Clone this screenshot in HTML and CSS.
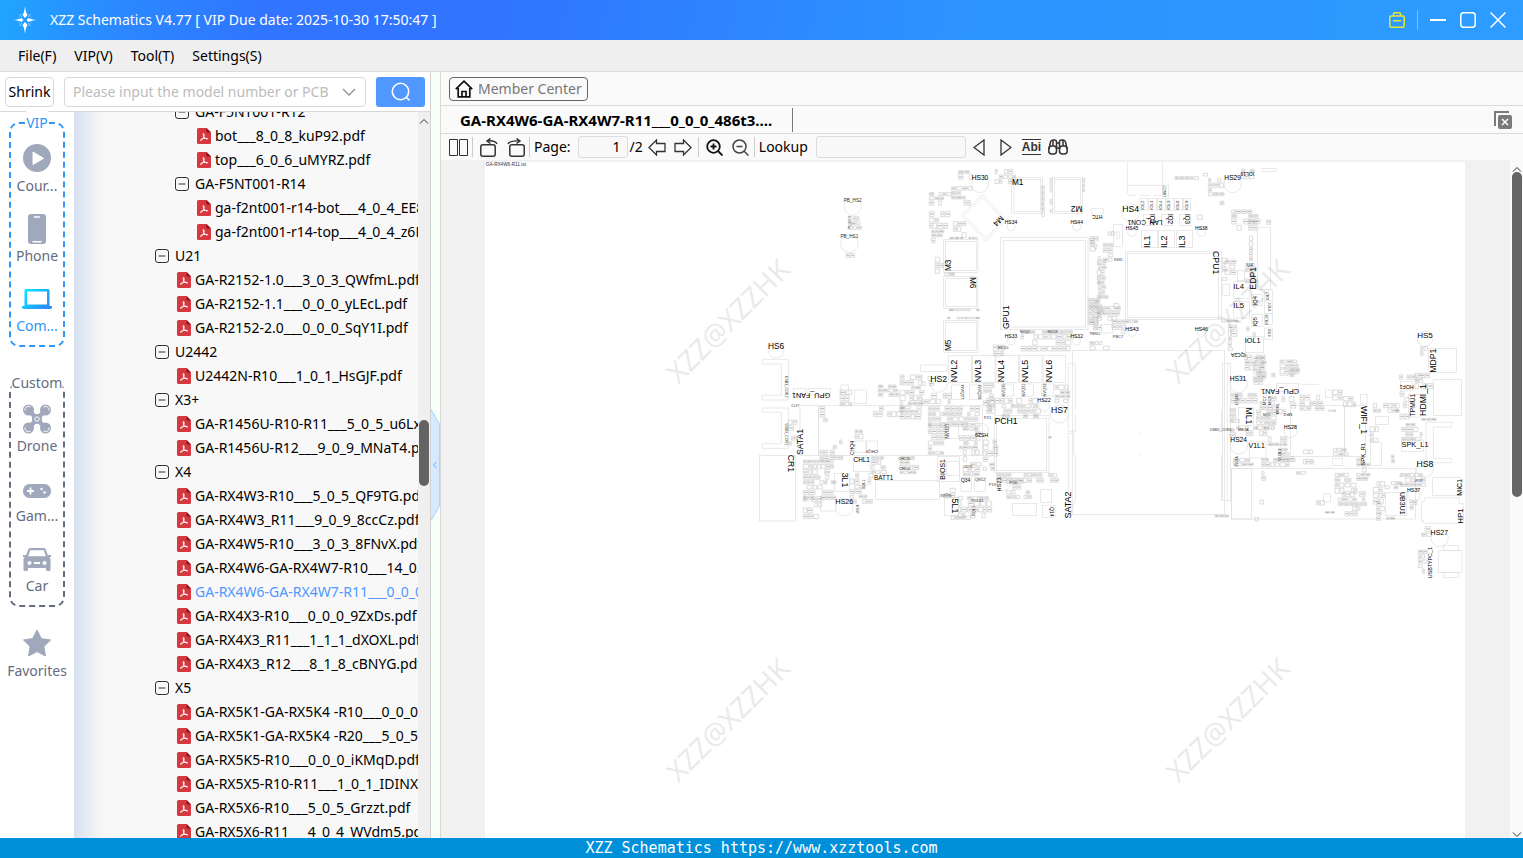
FILE: index.html
```html
<!DOCTYPE html>
<html lang="en">
<head>
<meta charset="utf-8">
<title>XZZ Schematics V4.77</title>
<link rel="stylesheet" href="styles.css">
</head>
<body>
<svg class="defs" aria-hidden="true">
  <symbol id="pdf" viewBox="0 0 14 16"><path d="M1.500 0H9.500L14 4.500V14.500Q14 16 12.500 16H1.500Q0 16 0 14.500V1.500Q0 0 1.500 0Z" fill="#d6383f"/><path d="M9.500 0L14 4.500H10.500Q9.500 4.500 9.500 3.500Z" fill="#8f1219"/><path d="M6.500 5.500C7.500 5.500 7.200 8 6.200 9.800C5 12 3.500 13 3.400 12.200C3.300 11.200 7 9.700 10.600 10.600C11 11.700 7.500 10.500 6.700 8.500C6.200 7.300 6 5.500 6.500 5.500Z" fill="none" stroke="#fff" stroke-width="1"/></symbol>
  <symbol id="minus" viewBox="0 0 14 14"><rect x=".5" y=".5" width="13" height="13" rx="2.500" fill="none" stroke="#333"/><path d="M3.500 7H10.500" stroke="#333"/></symbol>
</svg>
<div class="app">
  <header class="titlebar">
    <svg class="logo" viewBox="0 0 24 28"><circle cx="12" cy="14" r="6.500" fill="none" stroke="#8cc6ff" stroke-width="1" opacity=".5"/><path d="M6 8L9 11M18 8L15 11M6 20L9 17M18 20L15 17" stroke="#8cc6ff" stroke-width="1"/><g fill="#fff"><path d="M12 0C12.500 5 13.500 8 14.500 9L12 12L9.500 9C10.500 8 11.500 5 12 0ZM12 28C12.500 23 13.500 20 14.500 19L12 16L9.500 19C10.500 20 11.500 23 12 28ZM0 14C4 13.700 7 13 8.500 12L10.500 14L8.500 16C7 15 4 14.300 0 14ZM24 14C20 13.700 17 13 15.500 12L13.500 14L15.500 16C17 15 20 14.300 24 14Z"/></g></svg>
    <h1 class="title">XZZ Schematics V4.77 [ VIP Due date: 2025-10-30 17:50:47 ]</h1>
    <div class="window-controls">
      <button class="win" aria-label="Toolbox"><svg width="16" height="16" viewBox="0 0 16 16" fill="none" stroke="#e6e63c" stroke-width="1.500"><rect x=".8" y="4" width="14.400" height="11.200" rx="1.500"/><path d="M4.500 4V2Q4.500 .8 5.700 .8H10.300Q11.500 .8 11.500 2V4M4 8.800H12"/></svg></button>
      <span class="win-sep"></span>
      <button class="win" aria-label="Minimize"><svg width="16" height="16" viewBox="0 0 16 16"><path d="M0 8H16" stroke="#fff" stroke-width="2"/></svg></button>
      <button class="win" aria-label="Maximize"><svg width="16" height="16" viewBox="0 0 16 16"><rect x=".8" y=".8" width="14.400" height="14.400" rx="3" fill="none" stroke="#fff" stroke-width="1.500"/></svg></button>
      <button class="win" aria-label="Close"><svg width="16" height="16" viewBox="0 0 16 16"><path d="M.5 .5L15.500 15.500M15.500 .5L.5 15.500" stroke="#fff" stroke-width="1.500"/></svg></button>
    </div>
  </header>
  <nav class="menubar">
    <button class="menu">File(F)</button><button class="menu">VIP(V)</button><button class="menu">Tool(T)</button><button class="menu">Settings(S)</button>
  </nav>
  <div class="body">
    <section class="left">
      <form class="search">
        <button type="button" class="shrink">Shrink</button>
        <div class="combo">
          <input class="query" type="text" aria-label="Model number" placeholder="Please input the model number or PCB">
          <svg width="14" height="8" viewBox="0 0 14 8"><path d="M1 1L7 7L13 1" fill="none" stroke="#999" stroke-width="1.500"/></svg>
        </div>
        <button type="button" class="go" aria-label="Search"><svg width="20" height="20" viewBox="0 0 20 20" fill="none" stroke="#fff" stroke-width="1.600"><circle cx="9.500" cy="9.500" r="8.200"/><path d="M15.200 15.200L18.500 18.500"/></svg></button>
      </form>
      <div class="browse">
        <nav class="side">
          <div class="group vip">
            <span class="group-name">VIP</span>
            <button class="cat"><svg viewBox="0 0 32 32"><circle cx="16" cy="16" r="14" fill="#a0a8bc"/><path d="M12 10V22.500L22.500 16.300Z" fill="#fff" stroke="#fff" stroke-linejoin="round"/></svg>Cour...</button>
            <button class="cat"><svg viewBox="0 0 32 32"><rect x="7" y="2" width="18" height="30" rx="3" fill="#a0a8bc"/><path d="M13.500 5H18.500M12 29.800H20" stroke="#fff" stroke-width="1.500" stroke-linecap="round"/></svg>Phone</button>
            <button class="cat active"><svg viewBox="0 0 32 32"><defs><linearGradient id="lap" x2="1" y2=".6"><stop stop-color="#00f0ff"/><stop offset="1" stop-color="#2b8cff"/></linearGradient></defs><path fill="url(#lap)" fill-rule="evenodd" d="M5 7H27Q28.500 7 28.500 8.500V24H31V26L29.500 27H2.500L1 26V24H3.500V8.500Q3.500 7 5 7ZM6 9.500V22.500H26V9.500Z"/></svg>Com...</button>
          </div>
          <div class="group custom">
            <span class="group-name">Custom</span>
            <button class="cat"><svg viewBox="0 0 32 32"><g fill="#a0a8bc"><circle cx="7.500" cy="8" r="5.500"/><circle cx="24.500" cy="8" r="5.500"/><circle cx="7.500" cy="26" r="5.500"/><circle cx="24.500" cy="26" r="5.500"/><circle cx="16" cy="17" r="5"/></g><path d="M8 8.500L24 25.500M24 8.500L8 25.500" stroke="#a0a8bc" stroke-width="4.500"/><g fill="none" stroke="#fff"><path d="M4 8.500A3.500 3.500 0 0 1 9.500 5M28 8.500A3.500 3.500 0 0 0 22.500 5M4 25.500A3.500 3.500 0 0 0 9.500 29M28 25.500A3.500 3.500 0 0 1 22.500 29"/><circle cx="16" cy="17" r="2.200"/></g></svg>Drone</button>
            <button class="cat"><svg viewBox="0 0 32 32"><rect x="2" y="12" width="28" height="14" rx="6.500" fill="#a0a8bc"/><path d="M9.500 15.500V22.500M6 19H13" stroke="#fff" stroke-width="1.800"/><circle cx="20.500" cy="17" r="1.200" fill="#fff"/><circle cx="23.500" cy="20.500" r="1.200" fill="#fff"/></svg>Gam...</button>
            <button class="cat"><svg viewBox="0 0 32 32"><path transform="translate(0 2)" fill="#a0a8bc" fill-rule="evenodd" d="M9.500 4H22.500Q24.500 4 25 6L26.800 11H30V13H28.500L29.500 15V25.500Q29.500 27 28 27H26.500Q25 27 25 25.500V24H7V25.500Q7 27 5.500 27H4Q2.500 27 2.500 25.500V15L3.500 13H2V11H5.200L7 6Q7.500 4 9.500 4ZM9.200 6.300L7.200 12.300H24.800L22.800 6.300ZM6.500 19A2 2 0 1 0 10.500 19A2 2 0 1 0 6.500 19ZM21.500 19A2 2 0 1 0 25.500 19A2 2 0 1 0 21.500 19ZM13 18V20H19V18Z"/></svg>Car</button>
          </div>
          <button class="cat favorites"><svg viewBox="0 0 32 32"><path d="M16 3L20.300 11.600L29.500 13L22.900 19.500L24.400 29L16 24.600L7.600 29L9.100 19.500L2.500 13L11.700 11.600Z" fill="#a0a8bc" stroke="#a0a8bc" stroke-linejoin="round"/></svg>Favorites</button>
        </nav>
        <div class="tree-wrap">
          <ul class="tree">
            <li class="row sub"><svg class="tg"><use href="#minus"/></svg>GA-F5NT001-R12</li>
            <li class="row subfile"><svg class="pf"><use href="#pdf"/></svg>bot___8_0_8_kuP92.pdf</li>
            <li class="row subfile"><svg class="pf"><use href="#pdf"/></svg>top___6_0_6_uMYRZ.pdf</li>
            <li class="row sub"><svg class="tg"><use href="#minus"/></svg>GA-F5NT001-R14</li>
            <li class="row subfile"><svg class="pf"><use href="#pdf"/></svg>ga-f2nt001-r14-bot___4_0_4_EE8Xm.pdf</li>
            <li class="row subfile"><svg class="pf"><use href="#pdf"/></svg>ga-f2nt001-r14-top___4_0_4_z6Kqa.pdf</li>
            <li class="row"><svg class="tg"><use href="#minus"/></svg>U21</li>
            <li class="row file"><svg class="pf"><use href="#pdf"/></svg>GA-R2152-1.0___3_0_3_QWfmL.pdf</li>
            <li class="row file"><svg class="pf"><use href="#pdf"/></svg>GA-R2152-1.1___0_0_0_yLEcL.pdf</li>
            <li class="row file"><svg class="pf"><use href="#pdf"/></svg>GA-R2152-2.0___0_0_0_SqY1I.pdf</li>
            <li class="row"><svg class="tg"><use href="#minus"/></svg>U2442</li>
            <li class="row file"><svg class="pf"><use href="#pdf"/></svg>U2442N-R10___1_0_1_HsGJF.pdf</li>
            <li class="row"><svg class="tg"><use href="#minus"/></svg>X3+</li>
            <li class="row file"><svg class="pf"><use href="#pdf"/></svg>GA-R1456U-R10-R11___5_0_5_u6Lxx.pdf</li>
            <li class="row file"><svg class="pf"><use href="#pdf"/></svg>GA-R1456U-R12___9_0_9_MNaT4.pdf</li>
            <li class="row"><svg class="tg"><use href="#minus"/></svg>X4</li>
            <li class="row file"><svg class="pf"><use href="#pdf"/></svg>GA-RX4W3-R10___5_0_5_QF9TG.pdf</li>
            <li class="row file"><svg class="pf"><use href="#pdf"/></svg>GA-RX4W3_R11___9_0_9_8ccCz.pdf</li>
            <li class="row file"><svg class="pf"><use href="#pdf"/></svg>GA-RX4W5-R10___3_0_3_8FNvX.pdf</li>
            <li class="row file"><svg class="pf"><use href="#pdf"/></svg>GA-RX4W6-GA-RX4W7-R10___14_0.pdf</li>
            <li class="row file selected"><svg class="pf"><use href="#pdf"/></svg>GA-RX4W6-GA-RX4W7-R11___0_0_0_486t3.pdf</li>
            <li class="row file"><svg class="pf"><use href="#pdf"/></svg>GA-RX4X3-R10___0_0_0_9ZxDs.pdf</li>
            <li class="row file"><svg class="pf"><use href="#pdf"/></svg>GA-RX4X3_R11___1_1_1_dXOXL.pdf</li>
            <li class="row file"><svg class="pf"><use href="#pdf"/></svg>GA-RX4X3_R12___8_1_8_cBNYG.pdf</li>
            <li class="row"><svg class="tg"><use href="#minus"/></svg>X5</li>
            <li class="row file"><svg class="pf"><use href="#pdf"/></svg>GA-RX5K1-GA-RX5K4 -R10___0_0_0.pdf</li>
            <li class="row file"><svg class="pf"><use href="#pdf"/></svg>GA-RX5K1-GA-RX5K4 -R20___5_0_5.pdf</li>
            <li class="row file"><svg class="pf"><use href="#pdf"/></svg>GA-RX5K5-R10___0_0_0_iKMqD.pdf</li>
            <li class="row file"><svg class="pf"><use href="#pdf"/></svg>GA-RX5X5-R10-R11___1_0_1_IDINX.pdf</li>
            <li class="row file"><svg class="pf"><use href="#pdf"/></svg>GA-RX5X6-R10___5_0_5_Grzzt.pdf</li>
            <li class="row file"><svg class="pf"><use href="#pdf"/></svg>GA-RX5X6-R11___4_0_4_WVdm5.pdf</li>
          </ul>
          <div class="vbar"><svg width="10" height="6" viewBox="0 0 10 6"><path d="M1 5.500L5 1.500L9 5.500" fill="none" stroke="#333"/></svg><div class="thumb"></div></div>
        </div>
      </div>
    </section>
    <div class="divider"><button class="handle" aria-label="Collapse panel"><svg width="9" height="112" viewBox="0 0 9 112"><path d="M0 .5L8.500 15V97L0 111.500" fill="#d6e9ff" stroke="#a9d3fb"/><path d="M5.500 53L2.500 56L5.500 59" fill="none" stroke="#5fb0f5"/></svg></button></div>
    <main class="right">
      <div class="member-row"><a class="member" href="#"><svg width="18" height="18" viewBox="0 0 18 18" fill="none" stroke="#111" stroke-width="1.700"><path d="M.8 9.200L9 1.200L17.200 9.200M3.200 8V16.800H14.800V8M7 16.500V11.500H11V16.500"/></svg>Member Center</a></div>
      <div class="tabs">
        <button class="tab">GA-RX4W6-GA-RX4W7-R11___0_0_0_486t3....</button>
        <button class="close-all" aria-label="Close all"><svg width="18" height="18" viewBox="0 0 18 18"><path d="M1 15V1H15" fill="none" stroke="#7a7a7a" stroke-width="2"/><rect x="4" y="4" width="14" height="14" rx="2" fill="#7a7a7a"/><path d="M8 8L14 14M14 8L8 14" stroke="#fff" stroke-width="1.500"/></svg></button>
      </div>
      <div class="toolbar">
        <button class="tool t-pages" aria-label="Two pages"><svg width="19" height="17" viewBox="0 0 19 17" fill="none" stroke="#333"><path d="M.5 .5H8.500V16.500H.5ZM10.500 .5H18.500V16.500H10.500Z"/></svg></button>
        <span class="sep"></span>
        <button class="tool t-left" aria-label="Rotate left"><svg width="18" height="19" viewBox="0 0 18 19" fill="none" stroke="#333" stroke-width="1.500"><rect x=".8" y="6.800" width="14.400" height="11.400" rx="2"/><path d="M17 6C15.500 3 12 2.500 7.500 3M10.500 .5L7 3L10.500 5.500"/></svg></button>
        <button class="tool t-right" aria-label="Rotate right"><svg width="18" height="19" viewBox="0 0 18 19" fill="none" stroke="#333" stroke-width="1.500"><rect x="2.800" y="6.800" width="14.400" height="11.400" rx="2"/><path d="M1 6C2.500 3 6 2.500 12.500 3M9.500 .5L13 3L9.500 5.500"/></svg></button>
        <span class="sep"></span>
        <label class="lbl" for="page">Page:</label><input id="page" class="page-no" type="text" value="1"><span class="total">/2</span>
        <button class="tool" aria-label="Previous page"><svg width="18" height="17" viewBox="0 0 18 17" fill="none" stroke="#333" stroke-width="1.300"><path d="M1 8.500L8.500 1V4.500H17V12.500H8.500V16Z"/></svg></button>
        <button class="tool t-next" aria-label="Next page"><svg width="18" height="17" viewBox="0 0 18 17" fill="none" stroke="#333" stroke-width="1.300"><path d="M17 8.500L9.500 1V4.500H1V12.500H9.500V16Z"/></svg></button>
        <span class="sep"></span>
        <button class="tool t-in" aria-label="Zoom in"><svg width="17" height="17" viewBox="0 0 17 17" fill="none" stroke="#111" stroke-width="1.800"><circle cx="7.500" cy="7.500" r="6.300"/><path d="M12 12L16.500 16.500M4.500 7.500H10.500M7.500 4.500V10.500"/></svg></button>
        <button class="tool t-out" aria-label="Zoom out"><svg width="17" height="17" viewBox="0 0 17 17" fill="none" stroke="#444" stroke-width="1.500"><circle cx="7.500" cy="7.500" r="6.500"/><path d="M12.200 12.200L16.500 16.500M4.500 7.500H10.500"/></svg></button>
        <span class="sep"></span>
        <label class="lbl" for="lookup">Lookup</label><input id="lookup" class="lookup" type="text">
        <button class="tool t-prev" aria-label="Find previous"><svg width="12" height="17" viewBox="0 0 12 17"><path d="M11 1V16L1 8.500Z" fill="none" stroke="#333" stroke-width="1.300"/></svg></button>
        <button class="tool t-fwd" aria-label="Find next"><svg width="12" height="17" viewBox="0 0 12 17"><path d="M1 1V16L11 8.500Z" fill="none" stroke="#333" stroke-width="1.300"/></svg></button>
        <button class="tool abi">Abi</button>
        <button class="tool t-bin" aria-label="Find"><svg width="20" height="16" viewBox="0 0 20 16" fill="none" stroke="#333" stroke-width="1.500"><rect x=".8" y="7" width="7.700" height="8" rx="3"/><rect x="11.500" y="7" width="7.700" height="8" rx="3"/><path d="M1 10L2.500 3Q3 1 5 1H6.500Q8.500 1 8.500 3V10M19 10L17.500 3Q17 1 15 1H13.500Q11.500 1 11.500 3V10M8.500 4H11.500M8.500 9H11.500M5 1.500V7M15 1.500V7"/></svg></button>
      </div>
      <div class="viewer">
        <div class="canvas"><svg id="board" class="board" viewBox="1455 486 2940 2028" role="img" aria-label="Board schematic"></svg></div>
        <div class="vbar view-bar"><svg width="10" height="6" viewBox="0 0 10 6"><path d="M1 5.500L5 1.500L9 5.500" fill="none" stroke="#333"/></svg><div class="view-thumb"></div><svg class="down" width="10" height="6" viewBox="0 0 10 6"><path d="M1 .5L5 4.500L9 .5" fill="none" stroke="#333"/></svg></div>
      </div>
    </main>
  </div>
  <footer class="status">XZZ Schematics https://www.xzztools.com</footer>
</div>
<script src="board.js"></script>
</body>
</html>
```
FILE: styles.css
```css
* { box-sizing: border-box; }
body { margin: 0; font-family: "Noto Sans", "Open Sans", sans-serif; font-size: 14px; line-height: 24px; color: #000; }
button, input { font: inherit; color: inherit; margin: 0; padding: 0; border: 0; background: none; }
svg { display: block; flex: none; }
.defs { position: absolute; width: 0; height: 0; }
.app { height: 100vh; display: flex; flex-direction: column; overflow: hidden; }

.titlebar { flex: none; height: 40px; padding: 0 17px 0 13px; display: flex; align-items: center; background: linear-gradient(100deg, #1fa5ff 0, #2b88ff 8%, #3074ff 18%, #3074ff 32%, #2c93ff 62%, #2d9cff 100%); }
.logo { width: 24px; height: 28px; }
.title { margin: 0 0 0 13px; flex: 1; font-size: 14px; font-weight: 400; color: #fff; white-space: nowrap; }
.window-controls { display: flex; align-items: center; gap: 14px; }
.win-sep { width: 1px; height: 20px; margin: 0 -2px; background: #7cc0ff; }

.menubar { flex: none; height: 32px; padding-left: 18px; display: flex; gap: 18px; align-items: center; background: #efefef; border-bottom: 1px solid #dadada; }
.body { flex: 1; min-height: 0; display: flex; }
.left { flex: none; width: 430px; display: flex; flex-direction: column; }
.search { flex: none; height: 40px; padding: 0 5px; display: flex; align-items: center; border-bottom: 1px solid #d8d8d8; background: #fff; }
.shrink { width: 49px; height: 30px; border: 1px solid #d9d9d9; border-radius: 4px; }
.combo { flex: 1; height: 30px; margin: 0 10px; padding: 0 9px 0 8px; display: flex; align-items: center; border: 1px solid #d9d9d9; border-radius: 4px; }
.query { flex: 1; min-width: 0; margin-right: 6px; outline: 0; }
.query::placeholder { color: #bcbcbc; opacity: 1; }
.go { width: 49px; height: 30px; display: grid; place-items: center; border-radius: 3px; background: #5097ff; }

.browse { flex: 1; min-height: 0; display: flex; }
.side { flex: none; width: 74px; padding: 10px 9px 0; display: flex; flex-direction: column; align-items: center; background: #fff; }
.group { position: relative; width: 56px; height: 225px; padding-top: 18px; display: flex; flex-direction: column; align-items: center; gap: 14px; border: 2px dashed #2e96f5; border-radius: 10px; }
.custom { margin-top: 35px; border-color: #646c80; }
.group-name { position: absolute; top: -13px; left: 50%; transform: translateX(-50%); background: #fff; color: #2e96f5; }
.custom .group-name { color: #646c80; }
.cat { display: flex; flex-direction: column; align-items: center; height: 56px; color: #646c80; white-space: nowrap; }
.cat svg { width: 32px; height: 32px; }
.active { color: #2e96f5; }
.favorites { margin-top: 20px; }

.tree-wrap { flex: 1; min-width: 0; display: flex; overflow: hidden; background: linear-gradient(90deg, #d6e0f0 0, #e8ecf3 14px, #f3f4f6 24px, #f8f8f8 32px); }
.tree { flex: 1; min-width: 0; margin: -12px 0 0; padding: 0 0 0 81px; list-style: none; overflow: hidden; }
.row { height: 24px; display: flex; align-items: center; gap: 6px; white-space: nowrap; }
.sub { padding-left: 20px; }
.file, .subfile { gap: 4px; padding-left: 22px; }
.subfile { padding-left: 42px; }
.selected { color: #5097ff; }
.tg { width: 14px; height: 14px; }
.pf { width: 14px; height: 16px; }
.vbar { flex: none; width: 12px; padding-top: 6px; display: flex; flex-direction: column; align-items: center; background: #efefef; }
.thumb { width: 10px; height: 66px; margin-top: 296px; border-radius: 5px; background: #636363; }

.divider { flex: none; width: 11px; padding-top: 19px; display: flex; align-items: center; background: #f8fff8; border-left: 1px solid #d2d2d2; border-right: 1px solid #dadada; }
.handle { display: block; }

.right { flex: 1; min-width: 0; display: flex; flex-direction: column; background: #fafafa; }
.member-row { flex: none; height: 34px; padding-left: 8px; display: flex; align-items: center; border-bottom: 1px solid #dadada; }
.member { height: 24px; padding: 0 5px; display: flex; align-items: center; gap: 5px; line-height: 22px; border: 1px solid #666; border-radius: 4px; color: #777; text-decoration: none; }
.tabs { flex: none; height: 28px; padding-right: 11px; display: flex; align-items: center; justify-content: space-between; border-bottom: 1px solid #dadada; }
.tab { height: 24px; padding: 0 20px 0 19px; border-right: 1px solid #777; font-weight: 700; font-size: 15px; }
.toolbar { flex: none; height: 26px; padding-left: 8px; display: flex; align-items: center; white-space: nowrap; }
.sep { width: 1px; height: 20px; margin: 0 4px; background: #ccc; }
.tool { display: block; }
.t-left { margin: 0 9px 0 3px; }
.page-no { width: 50px; height: 22px; margin: 0 2px 0 7px; padding-right: 6px; text-align: right; border: 1px solid #dcdcdc; border-radius: 3px; background: #f8f8f8; }
.total { margin-right: 5px; }
.t-next { margin: 0 2px 0 8px; }
.t-in { margin: 0 9px 0 3px; }
.t-out { margin-right: 1px; }
.lookup { width: 150px; height: 22px; margin: 0 7px 0 8px; border: 1px solid #dcdcdc; border-radius: 3px; background: #f8f8f8; }
.t-fwd { margin: 0 10px 0 15px; }
.abi { height: 16px; line-height: 14px; font-size: 12px; font-weight: 700; color: #333; border-top: 1px solid #333; border-bottom: 1px solid #333; font-family: "Liberation Sans", Arial, sans-serif; }
.t-bin { margin-left: 7px; }
.viewer { flex: 1; min-height: 0; display: flex; background: #f1f1f1; }
.canvas { flex: 1; min-width: 0; padding: 2px 45px 0 44px; overflow: hidden; }
.board { width: 100%; background: #fff; }
.view-bar { width: 13px; background: #fafafa; }
.view-thumb { width: 10px; height: 325px; border-radius: 5px; background: #666; }
.down { margin-top: auto; }
.board text { font-family: "Liberation Sans", Arial, sans-serif; text-anchor: middle; fill: #000; }
.board .tiny { fill: #333; }
.board .mark { font-family: "Noto Sans", sans-serif; font-size: 84px; opacity: .08; }
.board .line { fill: none; stroke: #dedede; stroke-width: 2; }
.board .part { fill: none; stroke: #cccccc; stroke-width: 2; }
.board .ink { stroke: #8c8c8c; stroke-width: 2; fill: none; }

.status { flex: none; height: 20px; line-height: 20px; font-size: 15px; text-align: center; color: #fff; background: #0090da; font-family: "DejaVu Sans Mono", "Liberation Mono", monospace; }
```
FILE: board.js
```js
// Board drawing: outlines, ring pads, part clusters and designators, three units per pixel.
const NS = 'http://www.w3.org/2000/svg';
const board = document.getElementById('board');
function add(parent, tag, attrs, text) {
  const el = document.createElementNS(NS, tag);
  for (const k in attrs) el.setAttribute(k, attrs[k]);
  if (text) el.textContent = text;
  parent.appendChild(el);
  return el;
}
let seed = 7;
const rnd = () => (seed = (seed * 16807) % 2147483647) / 2147483647;

const areas = [
  { at: [2220, 480],
    rects: [[815,52,92,108],[822,58,80,96],[937,52,90,108],[943,58,79,96],[611,238,103,99],[617,244,92,87],[611,350,103,96],[617,356,92,84],[611,481,103,96],[617,487,92,84],[781,233,263,276],[790,242,246,259],[626,587,68,80],[697,587,68,80],[768,587,68,80],[838,587,68,80],[909,587,68,80],[764,767,163,170],[769,775,150,157],[58,886,108,197],[407,962,191,56],[235,737,492,149],[614,792,41,43],[345,843,33,35],[379,843,33,35],[340,893,50,42],[592,890,66,75],[620,904,38,42],[663,952,31,42],[704,952,32,42],[283,940,45,55],[613,1013,42,54],[241,1013,46,40],[818,1030,72,36],[541,615,80,19],[160,685,36,20],[204,685,68,20],[997,571,457,492],[635,675,36,44],[688,675,36,44],[785,672,36,36],[845,672,36,36],[905,672,36,36],[902,988,33,40],[907,1036,38,36],[343,690,36,40],[303,675,22,28],[180,737,55,149]],
    paths: ['M67 598H145V720H67V706H124V612H67Z','M67 744H145V865H67V851H124V757H67Z','M664 166L727 103L800 180L737 243Z','M672 166L727 112L791 180L737 234Z','M985 610H1006V748M1006 760V814H985V610M985 820H1002V884M1006 884V1020L992 1062M985 820V1060'],
    circles: [[108,570,24],[338,140,26],[328,251,26],[720,72,26],[813,200,12],[1010,200,12],[813,543,12],[1010,543,12],[596,672,25],[912,738,16],[958,762,27],[725,810,20],[790,972,20],[313,1042,26]],
    clusters: [[655,32,35,24],[765,28,60,38],[635,80,54,50],[568,98,55,38],[568,155,52,42],[640,185,35,45],[575,210,25,35],[618,232,92,6],[585,292,22,50],[614,338,38,10],[610,448,105,6],[622,472,90,6],[905,60,8,100],[930,55,6,105],[1028,55,6,40],[843,512,145,60],[1045,415,35,95],[1050,230,18,35],[760,555,30,25],[480,645,60,135],[545,700,80,35],[565,740,150,50],[565,790,44,95],[658,790,56,95],[730,670,20,80],[740,715,150,50],[945,675,40,50],[730,840,35,90],[770,940,175,20],[800,955,70,60],[190,900,90,110],[190,1010,48,65],[330,940,60,80],[655,1010,90,65],[270,840,30,60],[345,810,25,30],[240,740,15,45],[300,690,40,40],[400,740,80,30],[480,890,45,50],[670,890,40,50],[395,890,35,50],[415,675,55,35],[145,780,25,70],[240,870,15,30],[600,985,40,25],[1075,290,6,120],[325,170,35,34],[318,280,34,14],[622,1068,60,12],[926,830,10,6],[545,650,30,30]],
    labels: [['PB_HS2',338,120,14],['PB_HS1',328,230,14],['PL_LED1',329,186,9,-90],['HS30',720,54,20],['M1',833,66,25],['M2',1010,147,25,180],['M4',776,184,24,135],['HS34',813,187,15],['HS44',1010,187,15],['M3',624,316,25,-90],['M6',699,368,25,90],['M5',624,556,25,-90],['GPU1',798,472,26,-90],['HS33',813,530,15],['HS32',1010,530,15],['HS6',108,557,25],['HS2',596,658,26],['NVL2',641,633,27,-90],['NVL3',712,633,27,-90],['NVL4',783,633,27,-90],['NVL5',853,633,27,-90],['NVL6',925,633,27,-90],['USB3_CON2',140,680,11,90],['GPU_FAN1',213,708,22,180],['SATA1',180,846,26,-90],['CR1',152,910,26,90],['USB3_CON1',140,823,11,90],['NVQ27',669,697,13,90],['NVQ28',719,697,13,90],['NVQ30',792,690,12,-90],['NVQ31',852,690,12,-90],['NVQ32',914,690,12,-90],['HS22',912,720,16],['HS7',958,749,26],['PCH1',798,782,26],['P21',743,773,12],['HS29',725,825,16,180],['NVU21',621,813,14,-90],['CHQ4',338,864,15,-90],['CHQ3',396,874,13,180],['CHL1',365,900,19],['BATT1',431,952,19],['CHC10',493,895,11],['CHC6',493,926,12],['BIOS1',606,928,21,-90],['Q34',677,960,15],['Q852',720,959,13],['HS23',778,973,17,-90],['3L1',314,960,26,90],['HS26',313,1024,21],['5L1',645,1038,27,90],['SATA2',983,1035,27,-90],['Q14',937,1055,16,90],['PCL61',712,1022,12],['3QL1',372,973,12,-90],['5QL1',701,1052,12,-90],['HS37',351,1048,11,90],['P19',757,975,12],['SQ24',618,1006,13,180],['NVU10',789,562,10],['CL97',166,736,10],['C873',682,919,11],['NVQ5',855,515,11],['NVC8',937,515,11],['P26',820,968,13]] },
  { at: [3270, 480],
    rects: [[150,116,24,34],[176,116,24,34],[202,116,24,34],[228,116,24,34],[254,116,24,34],[280,116,22,34],[160,163,34,33],[214,163,34,33],[268,163,34,33],[154,212,48,51],[206,212,48,51],[259,212,48,51],[106,274,289,205],[112,281,274,191],[70,194,27,65],[502,203,40,185],[431,365,48,50],[431,424,48,50],[485,403,32,34],[485,463,32,36],[524,390,23,32],[524,426,23,34],[524,462,23,32],[524,504,23,34],[467,530,53,48],[1016,566,84,71],[442,332,22,30],[398,374,20,32],[516,26,42,9],[218,76,18,34],[34,493,33,26]],
    paths: ['M112 0V98Q112 106 120 106H138M150 106H182M192 106H210Q218 106 218 98V0M112 76H218','M5 146H40V160L34 166H5Z','M80 216Q90 210 89 226Q90 240 80 236Z'],
    circles: [[428,72,26],[122,158,27],[126,216,13],[334,216,13],[126,516,13],[334,516,13],[1005,536,23]],
    clusters: [[255,50,70,12],[355,55,35,52],[425,150,70,50],[475,180,20,30],[478,228,10,70],[397,275,14,80],[405,300,25,40],[22,300,22,110],[40,250,25,45],[0,420,20,90],[22,440,60,36],[66,480,34,40],[415,495,22,75],[470,500,45,28],[465,585,55,36],[490,615,30,40],[570,600,50,46],[0,235,15,25],[55,215,12,14],[110,480,35,10],[310,165,15,25],[455,28,30,18],[466,310,28,50],[530,180,14,20],[340,40,16,10],[390,105,12,20],[395,480,50,8],[0,545,55,20],[928,645,70,15],[992,560,12,24],[72,430,14,16]],
    labels: [['HS29',428,54,20],['IOL19',472,41,15,180],['HS4',122,146,26],['IOL2',158,136,13,-90],['IOL1',184,136,13,-90],['IOL4',210,136,13,-90],['IOL3',236,136,13,-90],['IOL8',262,136,13,-90],['IOL9',288,136,13,-90],['IQ1',186,177,19,90],['IQ2',240,177,19,90],['IQ3',293,177,19,90],['LAN_CON1',165,188,20,180],['HS45',126,204,15],['HS38',334,204,15],['IL1',170,245,27,-90],['IL2',222,245,27,-90],['IL3',275,245,27,-90],['CPU1',379,308,26,90],['HTC',22,171,15,180],['EDP1',488,355,26,-90],['U4',480,316,14],['IL4',446,378,23],['IL5',446,437,23],['IQ4',495,422,17,-90],['IQ5',495,485,17,-90],['IOL7',532,408,12,-90],['IOL8',539,442,11,90],['IOL10',531,480,11,-90],['IOL9',539,518,11,90],['IOL1',488,542,22],['IQC2A',445,584,15,180],['HS43',126,506,16],['HS46',334,506,16],['HS5',1005,525,24],['MDP1',1028,602,26,-90],['PBC7',84,531,12],['NSW1',85,301,9],['PBR01',15,520,10],['LANC27',225,93,9,-90]] },
  { at: [3270, 990],
    rects: [[445,232,45,55],[478,336,50,48],[602,227,162,153],[764,227,62,153],[842,337,33,69],[1031,149,84,107],[1028,443,83,53],[886,487,64,70],[1045,662,71,65],[1060,647,46,15],[1060,727,46,15],[424,415,552,152],[424,415,61,152],[935,330,65,35],[955,193,36,68],[560,160,66,24],[397,100,25,412],[706,180,20,22],[856,260,40,23],[728,386,30,20],[932,154,36,26],[811,194,20,28],[572,115,22,22],[700,492,22,24],[1112,456,14,28]],
    paths: ['M1003 503H1108V521H1120V572H1110V580H1000V572H994V515H1003Z','M1008 277H1085V291H1030V385H1085V398H1008Z','M394 240V310M394 374V512M412 100V512M635 163H686M148 310H156M148 374H156'],
    circles: [[446,162,26],[447,346,26],[602,304,19],[1005,415,26],[972,495,19],[1049,624,26]],
    clusters: [[425,190,70,32],[510,200,45,30],[500,240,50,50],[420,235,18,80],[440,290,85,18],[535,320,55,22],[430,385,45,26],[515,385,90,20],[565,355,35,28],[560,200,46,50],[630,195,70,40],[728,180,22,20],[640,360,30,45],[760,200,35,22],[850,220,60,20],[930,185,16,80],[975,130,45,50],[985,265,40,8],[935,280,60,45],[840,290,25,40],[800,385,30,60],[735,430,60,50],[745,485,80,36],[680,495,18,26],[765,530,40,26],[850,455,30,60],[860,515,14,45],[885,455,40,22],[930,430,70,38],[890,562,25,8],[985,660,18,65],[995,590,20,20],[515,425,12,24],[510,510,12,14],[495,545,12,20],[620,425,30,10],[600,115,20,22],[545,130,10,36],[535,275,24,26],[730,355,34,16],[705,545,26,6],[705,240,26,6],[960,510,12,32],[470,75,18,18],[492,80,26,70],[918,220,10,20],[904,375,10,20],[375,555,44,8]],
    labels: [['HS31',444,145,20],['CPU_FAN1',570,184,22,180],['ML1',476,258,26,90],['HS24',446,328,20],['V1L1',500,347,21],['HS28',601,290,16],['WIFI_1',821,270,26,90],['SPK_R1',818,373,18,-90],['SPK_L1',975,343,22],['TPMU1',967,225,20,-90],['HDMI_1',1000,210,26,-90],['HOF1',950,170,16,180],['HS8',1005,401,26],['MIC1',1107,472,21,-90],['HP1',1109,558,24,-90],['HS37',971,480,16],['UB3U1',939,520,21,90],['HS27',1048,607,21],['USBTYPC_1',1021,698,16,-90],['USB3_CON1',392,298,11],['MC7',522,212,13,-90],['MC8',537,212,13,-90],['MF2',594,254,13,180],['ME2A',460,298,12],['MCR1',563,236,12,-90],['V1QL1',568,374,12,-90],['LTQV2',440,208,11,-90],['MQ5',530,253,10],['UR37',985,453,10],['V1C2A',440,395,10,-90]] }
];

for (const a of areas) {
  const g = add(board, 'g', { transform: `translate(${a.at})` });
  for (const [x, y, width, height] of a.rects) add(g, 'rect', { class: 'line', x, y, width, height });
  for (const d of a.paths) add(g, 'path', { class: 'line', d });
  for (const [cx, cy, r] of a.circles) add(g, 'circle', { class: 'line', cx, cy, r });
  let parts = '', ink = '';
  for (const [x, y, w, h] of a.clusters) {
    for (let py = y; py < y + h; ) {
      const rowH = Math.min(10 + Math.floor(rnd() * 8), Math.max(6, h));
      for (let px = x; px < x + w; ) {
        const pw = Math.min(7 + Math.floor(rnd() * 10), Math.max(6, w));
        if (rnd() < 0.76) {
          parts += `M${px} ${py}h${pw}v${rowH - 2}h${-pw}z`;
          if (rnd() < 0.7) ink += `M${px + 2} ${py + (rowH >> 1) - 1}h${pw - 4}`;
        }
        px += pw + 3;
      }
      py += rowH + 2;
    }
  }
  add(g, 'path', { class: 'part', d: parts });
  add(g, 'path', { class: 'ink', d: ink });
  for (const [t, x, y, s, r = 0] of a.labels)
    add(g, 'text', { class: s < 15 ? 'tiny' : 'name', 'font-size': s, transform: `translate(${x} ${y}) rotate(${r})`, y: Math.round(s * 0.36) }, t);
}
add(board, 'text', { class: 'tiny', x: 1518, y: 498, 'font-size': 14 }, 'GA-RX4W6-R11.txt');
for (const [x, y] of [[2184, 963], [3684, 963], [2184, 2160], [3684, 2160]])
  add(board, 'text', { class: 'mark', transform: `translate(${x} ${y}) rotate(-45)`, y: 30 }, 'XZZ@XZZHK');
```
